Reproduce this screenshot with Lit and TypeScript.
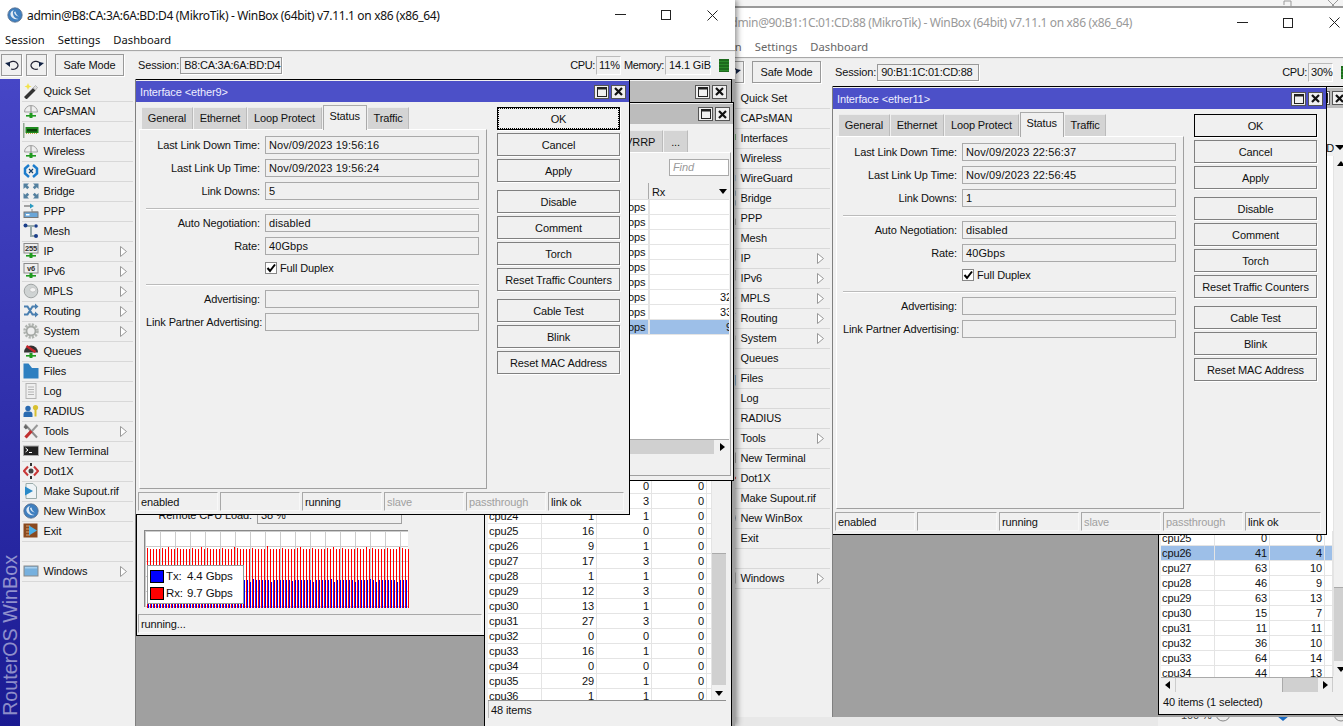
import { LitElement, html, css, svg } from "lit";
import { customElement } from "lit/decorators.js";

const ball = svg`<circle cx="8" cy="8" r="7.2" fill="#3f7fbf" stroke="#5a6f8a" stroke-width=".8"/><path d="M3.5 8c1 3 4 5 8 4-3-.5-5-2-5.5-5-.3-1.5 0-3 1-4-2.500 .5-4 2.500-3.500 5z" fill="#dfeaf5"/><path d="M7 5c.5 2.500 2 4 5 4.500-2-1-3-2.500-3.500-5z" fill="#dfeaf5"/>`;
const corner = svg`<path d="M.5 .5h5.500l-1.800 1.800 2 2-1.900 1.900-2-2L.5 6z" fill="#54809f"/>`;
const plug = svg`<rect x="3" y="12" width="10" height="1.600" fill="#1f9a1f"/><rect x="6.500" y="10" width="3" height="5" fill="#1f9a1f"/>`;
const monitor = (t: string) => svg`<rect x="1" y=".5" width="14" height="9.500" fill="#eee" stroke="#8a8a8a"/><text x="8" y="8" text-anchor="middle" font-size="7.500" font-weight="700" font-family="Liberation Sans, sans-serif" fill="#333">${t}</text>${plug}`;

const ICONS: Record<string, unknown> = {
  quick: svg`<path d="M1 14l9-9 2.500 2.500-9 9z" fill="#333"/><path d="M10 5l2.500-2.500 2 2L12.500 7z" fill="#ddd" stroke="#888" stroke-width=".5"/><path d="M5 0l1 2.500 2.500 1-2.500 1-1 2.500-1-2.500L1.500 3.500 4 2.500z" fill="#f2e24a"/>`,
  dome: svg`<path d="M1.500 9a6.500 6.500 0 0 1 13 0z" fill="#eee" stroke="#a0a0a0"/><path d="M8 3v8" stroke="#8a8a8a"/>${plug}`,
  iface: svg`<rect x="0" y="0" width="1.500" height="15" fill="#93a893"/><rect x="2.500" y="4" width="13" height="6" fill="#1e8a1e"/><rect x="4" y="6" width="10" height="2.500" fill="#0b3f0b"/><path d="M3 10.500h12" stroke="#bba23a" stroke-dasharray="1 1"/>`,
  wg: svg`<path d="M6 2L2 5.500v5L6 14" stroke="#1c7ccc" stroke-width="2.500" fill="none"/><path d="M10 2l4 3.500v5L10 14" stroke="#1c7ccc" stroke-width="2.500" fill="none"/><path d="M6 6l4 4M10 6l-4 4" stroke="#123f6b" stroke-width="1.200"/>`,
  bridge: svg`${corner}<g transform="rotate(90 8 8)">${corner}</g><g transform="rotate(180 8 8)">${corner}</g><g transform="rotate(270 8 8)">${corner}</g>`,
  ppp: svg`<path d="M1 3h6" stroke="#888" stroke-width="1.500"/><path d="M7 .5l4 2.500-4 2.500z" fill="#2a9ac0"/><rect x="1" y="9" width="14" height="5.500" fill="#6aa6d8" stroke="#777"/><rect x="3" y="11" width="3.500" height="1.500" fill="#fff"/><path d="M9 6v3h6" stroke="#888" fill="none"/>`,
  mesh: svg`<path d="M3 3h8M8 3v10h4" stroke="#9aa" stroke-width="2" fill="none"/><circle cx="2.500" cy="2.500" r="2" fill="#1c3f8a"/><circle cx="13" cy="3" r="1.800" fill="#1c3f8a"/><circle cx="13" cy="13" r="2" fill="#1c3f8a"/>`,
  ip: monitor("255"),
  ip6: monitor("v6"),
  mpls: svg`<circle cx="8" cy="8" r="6.800" fill="#cfd3d3" stroke="#a0a4a4"/><ellipse cx="9.800" cy="6.800" rx="3" ry="2.200" fill="#f4f4f4" stroke="#aaa" stroke-width=".5"/>`,
  routing: svg`<path d="M1 3.500h3.500l5 8H13M1 11.500h3.500l5-8H13" stroke="#4a7fb0" fill="none" stroke-width="2"/><path d="M12 .5l3.500 3-3.500 3zM12 8.500l3.500 3-3.500 3z" fill="#4a7fb0"/>`,
  system: svg`<circle cx="8" cy="8" r="6.500" fill="none" stroke="#b0b4b0" stroke-width="2.500" stroke-dasharray="2.200 1.200"/><circle cx="8" cy="8" r="4.500" fill="#eee" stroke="#a4a8a4" stroke-width="1.800"/>`,
  queues: svg`<path d="M1 9.500a7 7 0 0 1 14 0z" fill="#333"/><path d="M3.500 3l9 6" stroke="#c8242c" stroke-width="2.500"/>${plug}`,
  files: svg`<path d="M.5 .5h5l3.500 4.500h6.500v10.500H.5z" fill="#2e7fc0"/>`,
  log: svg`<rect x="3" y=".5" width="10" height="15" fill="#efefef" stroke="#b4b4b4"/><path d="M5 4h6M5 6.500h6M5 9h6M5 11.500h6" stroke="#b4b4b4"/>`,
  radius: svg`<circle cx="5" cy="5.500" r="2.700" fill="#2a6ab0"/><path d="M.5 14v-2.500a3 3 0 0 1 3-3h3a3 3 0 0 1 3 3V14z" fill="#2a6ab0"/><circle cx="12.500" cy="4.500" r="2.600" fill="#d8c030"/><path d="M11.500 6.500h2v7h-2z" fill="#d8c030"/>`,
  tools: svg`<path d="M2 1.500l12 13" stroke="#8c8c8c" stroke-width="2"/><path d="M1.500 3l2.500 2.500" stroke="#666" stroke-width="3"/><path d="M14.500 2L8 9" stroke="#999" stroke-width="2"/><path d="M8.500 8L2.500 14.500" stroke="#c03030" stroke-width="3.200"/>`,
  term: svg`<rect x=".5" y="3" width="15" height="9.500" fill="#222" stroke="#aaa"/><path d="M2.500 5l2.500 2-2.500 2M6 9.500h3" stroke="#fff" fill="none"/>`,
  dot1x: svg`<circle cx="8" cy="8" r="2.500" fill="#444"/><path d="M5 3.500L1 8l4 4.500M11 3.500L15 8l-4 4.500" stroke="#c83838" stroke-width="2" fill="none"/><path d="M8 0v3M8 13v3" stroke="#333" stroke-width="2"/>`,
  supout: svg`<path d="M3 .5h7l3.500 3.500v11.500H3z" fill="#eef3f6" stroke="#9aa"/><path d="M2 3.500l8 4.500-8 4.500z" fill="#2a8ac8"/>`,
  winbox: ball,
  exit: svg`<rect x=".5" y=".5" width="14" height="14" fill="#8a4a20"/><path d="M3 3h4M3 6h3M3 9h3M3 12h4" stroke="#d8a070"/><path d="M14 7.500L6 2.500v10z" fill="#4ab0e8"/>`,
  windows: svg`<rect x="1" y="3" width="14" height="10" fill="#76b0de" stroke="#8a8a8a"/><rect x="2" y="4" width="12" height="1.500" fill="#a8d0ee"/>`,
};

type MenuItem = { n?: string; i?: string; sub?: boolean };
const MENU: MenuItem[] = [
  { n: "Quick Set", i: "quick" }, { n: "CAPsMAN", i: "dome" }, { n: "Interfaces", i: "iface" }, { n: "Wireless", i: "dome" },
  { n: "WireGuard", i: "wg" }, { n: "Bridge", i: "bridge" }, { n: "PPP", i: "ppp" }, { n: "Mesh", i: "mesh" },
  { n: "IP", i: "ip", sub: true }, { n: "IPv6", i: "ip6", sub: true }, { n: "MPLS", i: "mpls", sub: true }, { n: "Routing", i: "routing", sub: true },
  { n: "System", i: "system", sub: true }, { n: "Queues", i: "queues" }, { n: "Files", i: "files" }, { n: "Log", i: "log" },
  { n: "RADIUS", i: "radius" }, { n: "Tools", i: "tools", sub: true }, { n: "New Terminal", i: "term" }, { n: "Dot1X", i: "dot1x" },
  { n: "Make Supout.rif", i: "supout" }, { n: "New WinBox", i: "winbox" }, { n: "Exit", i: "exit" }, {},
  { n: "Windows", i: "windows", sub: true },
];

type Row = [string, string, string, string];
const LEFT_ROWS: Row[] = [
  ["cpu22", "", "0", "0"], ["cpu23", "", "3", "0"], ["cpu24", "1", "1", "0"], ["cpu25", "16", "0", "0"], ["cpu26", "9", "1", "0"],
  ["cpu27", "17", "3", "0"], ["cpu28", "1", "1", "0"], ["cpu29", "12", "3", "0"], ["cpu30", "13", "1", "0"], ["cpu31", "27", "3", "0"],
  ["cpu32", "0", "0", "0"], ["cpu33", "16", "1", "0"], ["cpu34", "0", "0", "0"], ["cpu35", "29", "1", "0"], ["cpu36", "1", "1", "0"],
];
const RIGHT_ROWS: Row[] = [
  ["cpu25", "0", "0", ""], ["cpu26", "41", "4", ""], ["cpu27", "63", "10", ""], ["cpu28", "46", "9", ""], ["cpu29", "63", "13", ""],
  ["cpu30", "15", "7", ""], ["cpu31", "11", "11", ""], ["cpu32", "36", "10", ""], ["cpu33", "64", "14", ""], ["cpu34", "44", "13", ""],
];

const BUTTON_GROUPS = [["OK", "Cancel", "Apply"], ["Disable", "Comment", "Torch", "Reset Traffic Counters"], ["Cable Test", "Blink", "Reset MAC Address"]];

const ctlMax = html`<span class="ctl"><svg width="10" height="10" viewBox="0 0 10 10"><rect x=".5" y=".5" width="9" height="9" fill="none" stroke="#222"/><path d="M0 1.500h10" stroke="#222" stroke-width="2"/></svg></span>`;
const ctlClose = html`<span class="ctl"><svg width="9" height="9" viewBox="0 0 9 9"><path d="M1 1l7 7M8 1l-7 7" stroke="#111" stroke-width="2.200"/></svg></span>`;
const miniArrow = (d: string) => html`<svg width="10" height="10" viewBox="0 0 10 10"><path d="${d}" fill="#000"/></svg>`;

function bars() {
  const out: unknown[] = [];
  for (let i = 0; i < 88; i++) {
    const x = 2 + i * 3;
    const r = 17 + ((i * 7) % 5 === 0 ? 0 : 1) + ((i * 13) % 11 === 3 ? -2 : 0);
    const b = 49 + ((i * 5) % 7 === 2 ? 2 : 0) - ((i * 3) % 13 === 1 ? 1 : 0);
    out.push(svg`<rect x="${x}" y="${r}" width="1" height="${77 - r}" fill="#f00"/><rect x="${x + 1}" y="${b}" width="1" height="${77 - b}" fill="#00f"/>`);
  }
  return out;
}

@customElement("app-root")
export class AppRoot extends LitElement {
  static styles = css`
    :host { display: block; position: relative; width: 1343px; height: 726px; overflow: hidden; background: #f0f0f0;
      font: 11px "Liberation Sans", Arial, sans-serif; letter-spacing: -.12px; color: #111; }
    * { box-sizing: border-box; }
    .strip { position: absolute; left: 735px; display: block; }
    .strip.top { top: 0; }
    .strip.bottom { top: 716px; }
    .wb { position: absolute; display: flex; flex-direction: column; background: #f0f0f0; overflow: hidden; }
    .wb.left { left: 0; top: 0; width: 735px; height: 726px; box-shadow: 2px 0 6px rgba(0,0,0,.45); z-index: 2; overflow: visible; }
    .wb.right { left: 697px; top: 7px; width: 660px; height: 710px; border-top: 1px solid #9a9a9a; z-index: 1; }
    .tb { height: 30px; flex: none; background: #fff; display: flex; align-items: center; padding-left: 7px; font: 12px "Noto Sans", sans-serif; letter-spacing: -.34px; gap: 4px; }
    .right .tb { height: 29px; color: #999; }
    .tb .title { flex: 1; white-space: nowrap; }
    .sys { display: flex; width: 138px; height: 30px; align-items: center; }
    .sys span { width: 46px; display: flex; justify-content: center; }
    .mb { height: 21px; flex: none; background: #fff; display: flex; gap: 13px; padding-left: 5px; align-items: center; font: 11.2px "Noto Sans", sans-serif; letter-spacing: 0; border-bottom: 1px solid #a8a8a8; padding-bottom: 1px; }
    .right .mb { color: #666; }
    .tools { height: 28px; flex: none; display: flex; align-items: center; padding: 0 6px 1px 1px; border-top: 1px solid #e8e8e8; }
    .tbtn { height: 22px; border: 1px solid #999; display: flex; align-items: center; justify-content: center; background: #f0f0f0; box-shadow: 1px 1px 0 #fff; flex: none; }
    .tbtn.ic { width: 21px; margin-right: 4px; }
    .tbtn.safe { width: 69px; margin: 0 14px 0 4px; }
    .lbl { white-space: nowrap; }
    .lbl.n { letter-spacing: -.4px; }
    .sess { margin-left: 1px; width: 102px; height: 17px; border: 1px solid #999; background: #f0f0f0; padding-left: 3px; line-height: 15px; white-space: nowrap; box-shadow: 1px 1px 0 #fff; letter-spacing: -.25px; }
    .spacer { flex: 1; }
    .mon { border: 1px solid #ccc; border-color: #bbb #fff #fff #bbb; height: 19px; line-height: 17px; padding: 0 3px; white-space: nowrap; }
    .mon.cpu { width: 25px; margin: 0 3px 0 1px; padding: 0 2px; }
    .mon.cpu.solo { margin-right: 8px; }
    .mon.mem { width: 46px; margin: 0 8px 0 1px; }
    .led { width: 10px; height: 13px; background: repeating-linear-gradient(#1d6a1d 0 2px, #2a8a2a 2px 3px); flex: none; }
    .main { flex: 1; display: flex; min-height: 0; }
    .side { width: 20px; flex: none; background: linear-gradient(#4646c6, #1a1a92); display: flex; align-items: flex-end; justify-content: center; padding-bottom: 10px; overflow: hidden; }
    .side span { writing-mode: vertical-rl; transform: rotate(180deg); color: rgba(255,255,255,.5); font-size: 19.7px; letter-spacing: 0; white-space: nowrap; line-height: 20px; }
    .menu { width: 115px; flex: none; padding: 3px 2px 0 2px; }
    .mi { height: 20px; border-bottom: 1px solid #d8d8d8; display: flex; align-items: center; gap: 4.500px; padding: 0 0 1px 1px; position: relative; }
    .mi svg.ico { width: 16px; height: 16px; flex: none; }
    .mi .tri { position: absolute; right: 6px; top: 4px; }
    .mdi { flex: 1; position: relative; background: #a0a0a0; border-left: 1px solid #808080; overflow: hidden; }
    .win { position: absolute; background: #f0f0f0; border: 1px solid #000; display: flex; flex-direction: column; }
    .wt { height: 21px; flex: none; background: #bcbcbc; display: flex; align-items: center; justify-content: flex-end; gap: 2px; padding: 0 3px 0 4px; color: #fff; margin-top: 1px; }
    .wt .t { flex: 1; white-space: nowrap; }
    .ctl { width: 15px; height: 14px; background: #f0f0f0; border: 1px solid #555; display: flex; align-items: center; justify-content: center; flex: none; }
    .dlg { z-index: 5; }
    .dlg .wt { background: #4c50c8; color: #eef; margin: 1px 0 0; }
    .dlg.l { left: -1px; top: 0; width: 495px; height: 436px; }
    .dlg.r { left: -1px; top: 0; width: 495px; height: 449px; }
    .body { flex: 1; display: flex; min-height: 0; padding: 2px 9px 0 3px; }
    .tabpane { width: 348px; flex: none; display: flex; flex-direction: column; }
    .tabs { display: flex; height: 25px; align-items: flex-end; padding-left: 3px; gap: 1px; flex: none; }
    .tab { height: 22px; padding: 0 5.800px 1px; background: #d4d4d4; display: flex; align-items: center; border-top: 1px solid #ececec; border-right: 1px solid #bbb; white-space: nowrap; }
    .tab.on { height: 25px; background: #f0f0f0; border: 1px solid #aaa; border-bottom: 0; padding-bottom: 4px; margin-bottom: -1px; z-index: 1; position: relative; }
    .panel { flex: 1; border: 1px solid; border-color: #fff #a0a0a0 #a0a0a0 #fff; padding: 6px 7px 0 6px; display: flex; flex-direction: column; gap: 5px; }
    .frow { display: flex; gap: 5px; height: 18px; align-items: center; flex: none; }
    .frow.chk { height: 16px; }
    .frow label { width: 114px; text-align: right; white-space: nowrap; flex: none; }
    .frow .val { flex: 1; height: 18px; border: 1px solid #a0a0a0; border-color: #8f8f8f #fff #fff #8f8f8f; outline: 1px solid #aaa; outline-offset: -1px; line-height: 16px; padding-left: 3px; background: #f0f0f0; letter-spacing: .1px; }
    .cb { width: 12px; height: 12px; border: 1px solid #888; background: #fff; flex: none; display: flex; align-items: center; justify-content: center; }
    .duplex { display: flex; gap: 3px; align-items: center; }
    .sep { height: 1px; background: #bbb; margin-top: 3px; flex: none; box-shadow: 0 1px 0 #fff; }
    .btns { flex: 1; margin: 3px 0 0 10px; display: flex; flex-direction: column; gap: 8px; }
    .bgrp { display: flex; flex-direction: column; gap: 3px; }
    .btn { height: 23px; border: 1px solid #808080; background: #f0f0f0; box-shadow: 1px 1px 0 #fff; display: flex; align-items: center; justify-content: center; white-space: nowrap; }
    .btn.def { border-color: #000; }
    .btn.focus span { outline: 1px dotted #000; outline-offset: 0; width: 119px; height: 19px; display: flex; align-items: center; justify-content: center; }
    .status { height: 25px; flex: none; display: flex; gap: 2px; padding: 3px 4px 3px 2px; }
    .cell { width: 80px; flex: none; border: 1px solid; border-color: #a8a8a8 #f8f8f8 #f8f8f8 #a8a8a8; padding: 1px 0 0 2px; display: flex; align-items: center; white-space: nowrap; }
    .cell.dim { color: #a0a0a0; }
    .cell.last { width: 76px; }
    .gw { left: 0; top: 200px; width: 420px; height: 357px; z-index: 1; padding: 0 1px; }
    .gform { height: 244px; display: flex; justify-content: flex-end; align-items: flex-end; flex: none; width: 264px; gap: 5px; }
    .gform .v { width: 145px; height: 18px; border: 1px solid #a0a0a0; padding-left: 3px; line-height: 16px; flex: none;}
    .gform .lbl { line-height: 18px; }
    .graph { position: relative; width: 264px; height: 77px; margin: 6px 0 0 6px; flex: none; border-left: 1px solid #888; border-top: 1px solid #888; background-color: #fff;
      background-image: linear-gradient(90deg, #ccc 1px, transparent 1px), linear-gradient(#ccc 1px, transparent 1px); background-size: 15px 15px; }
    .graph svg { position: absolute; left: 0; top: 0; }
    .legend { position: absolute; left: 2px; top: 34px; width: 97px; height: 39px; background: #fff; border: 1px solid #999; padding: 3px 2px; display: flex; flex-direction: column; gap: 3px; font-size: 11.5px; }
    .lg { display: flex; align-items: center; gap: 2px; height: 14px; }
    .lg i { width: 14px; height: 13px; border: 1px solid #000; flex: none; }
    .lg i.tx { background: #00f; } .lg i.rx { background: #f00; }
    .lg b { font-weight: 400; width: 19px; }
    .gstat { margin: 7px 0 0 0; height: 19px; width: 344px; flex: none; border: 1px solid; border-color: #a8a8a8 #f8f8f8 #f8f8f8 #a8a8a8; padding-left: 2px; display: flex; align-items: center; }
    .list { display: flex; flex-direction: column; background: #fff; overflow: hidden; }
    .row { height: 15px; flex: none; display: flex; border-bottom: 1px solid #e4e4e4; background: #fff; }
    .row.sel { background: #9dbfe8; }
    .row > span { height: 14px; line-height: 14px; padding: 0 2px 0 1px; border-right: 1px solid #e4e4e4; white-space: nowrap; text-align: right; flex: none; overflow: hidden; }
    .row > span:first-child { text-align: left; }
    .cpuw { left: 348px; top: 0; width: 248px; height: 660px; z-index: 2; }
    .cpuw .wt { padding-right: 4px; }
    .cpuw .list { position: relative; margin: 0 0 0 3px; height: 222px; width: 238px; border-bottom: 1px solid #909090; flex: none; }
    .cpuw .gapper { height: 377px; flex: none; }
    .cw0 { width: 54px; } .cw1 { width: 55px; } .cw2 { width: 55px; } .cw3 { width: 55px; }
    .vbar { position: absolute; right: 0; top: 0; bottom: 0; width: 15px; background: #d0d0d0; border-left: 1px solid #e4e4e4; display: flex; flex-direction: column; }
    .vbar .thumb { height: 75px; background: #f0f0f0; border-bottom: 1px solid #aaa; flex: none; }
    .vbar .fill { flex: 1; }
    .vbar .sbtn { height: 15px; flex: none; background: #f0f0f0; display: flex; align-items: center; justify-content: center; }
    .foot { margin: 0 5px 0 3px; height: 17px; border-left: 1px solid #bbb; padding-left: 2px; display: flex; align-items: center; flex: none; }
    .ifw { left: 347px; top: 23px; width: 251px; height: 379px; z-index: 3; }
    .ifw .wt { margin-top: 1px; height: 20px; }
    .tabs2 { display: flex; justify-content: flex-end; height: 28px; align-items: flex-end; gap: 1px; padding-right: 45px; flex: none; }
    .tabs2 .tab { height: 22px; padding: 0 7px; }
    .ifp { flex: 1; margin: 0 2px 4px 0; border: 1px solid; border-color: #fff #a0a0a0 #a0a0a0 #fff; display: flex; flex-direction: column; padding-right: 1px; }
    .find { align-self: flex-end; width: 60px; height: 17px; margin: 6px 0 7px 0; background: #fff; border: 1px solid #aaa; color: #999; font-style: italic; padding-left: 3px; line-height: 15px; flex: none; }
    .itable { margin: 0 0 21px 0; flex: 1; background: #fff; display: flex; flex-direction: column; overflow: hidden; }
    .ihdr { height: 17px; background: #f0f0f0; display: flex; flex: none; justify-content: flex-end; border-bottom: 1px solid #ddd; }
    .ihdr span { width: 81px; border-left: 1px solid #aaa; padding-left: 3px; position: relative; line-height: 19px; }
    .ihdr span svg { position: absolute; right: 1px; top: 4px; }
    .irow { height: 15px; flex: none; display: flex; justify-content: flex-end; border-bottom: 1px solid #e4e4e4; }
    .irow.sel { background: #9dbfe8; }
    .irow span { width: 81px; text-align: right; line-height: 14px; border-left: 2px solid #e4e4e4; overflow: hidden; white-space: nowrap; }
    .irow span em { font-style: normal; display: inline-block; margin-right: -3px; }
    .irow span.nm { width: 20px; border: 0; text-align: left; }
    .irest { flex: 1; }
    .ih { height: 15px; flex: none; background: #d0d0d0; border-top: 1px solid #aaa; display: flex; justify-content: flex-end; }
    .ih .b { width: 15px; background: #f0f0f0; display: flex; align-items: center; justify-content: center; }
    .tw { left: 325px; top: 0; width: 210px; height: 629px; z-index: 1; padding-left: 2px; }
    .tw .wt { height: 20px; justify-content: flex-end; padding-right: 20px; margin-top: 1px; }
    .thead { height: 16px; margin-top: 32px; background: #f0f0f0; display: flex; justify-content: flex-end; align-items: center; padding-right: 22px; flex: none; gap: 1px; line-height: 15px; }
    .tlist { position: relative; flex: 1; min-height: 0; display: flex; flex-direction: column; }
    .tlist .spacer2 { height: 375px; flex: none; background: #fff; }
    .tlist .list { width: 172px; height: 146px; flex: none; }
    .tlist .row { width: 172px; }
    .tlist .cw3 { width: 8px; padding: 0; }
    .tlist .vbar { width: 15px; top: 0; bottom: auto; height: 520px; left: 172px; }
    .tlist .vbar .thumb { height: 417px; }
    .hs { height: 15px; width: 172px; flex: none; display: flex; border-top: 1px solid #aaa; background: #f0f0f0; }
    .hs .b { width: 15px; display: flex; align-items: center; justify-content: center; flex: none; border-right: 1px solid #ccc; }
    .hs .th { width: 107px; border-right: 1px solid #aaa; }
    .hs .tr { flex: 1; background: #d0d0d0; }
    .foot2 { height: 19px; display: flex; align-items: center; padding-left: 2px; flex: none; }
  `;

  private dialog(cls: string, name: string, f: { down: string; up: string; n: string }, focused: boolean) {
    return html`<div class="win dlg ${cls}">
      <div class="wt"><span class="t">Interface &lt;${name}&gt;</span>${ctlMax}${ctlClose}</div>
      <div class="body">
        <div class="tabpane">
          <div class="tabs">
            <span class="tab">General</span><span class="tab">Ethernet</span><span class="tab">Loop Protect</span><span class="tab on">Status</span><span class="tab">Traffic</span>
          </div>
          <div class="panel">
            <div class="frow"><label>Last Link Down Time:</label><span class="val">${f.down}</span></div>
            <div class="frow"><label>Last Link Up Time:</label><span class="val">${f.up}</span></div>
            <div class="frow"><label>Link Downs:</label><span class="val">${f.n}</span></div>
            <div class="sep"></div>
            <div class="frow"><label>Auto Negotiation:</label><span class="val">disabled</span></div>
            <div class="frow"><label>Rate:</label><span class="val">40Gbps</span></div>
            <div class="frow chk"><label></label><span class="duplex"><span class="cb"><svg width="10" height="10" viewBox="0 0 10 10"><path d="M1.500 5l2.500 3 5-6.500" stroke="#000" stroke-width="2" fill="none"/></svg></span>Full Duplex</span></div>
            <div class="sep"></div>
            <div class="frow"><label>Advertising:</label><span class="val"></span></div>
            <div class="frow"><label>Link Partner Advertising:</label><span class="val"></span></div>
          </div>
        </div>
        <div class="btns">
          ${BUTTON_GROUPS.map((g) => html`<div class="bgrp">${g.map((b) => html`<div class="btn ${b === "OK" ? "def" : ""} ${b === "OK" && focused ? "focus" : ""}"><span>${b}</span></div>`)}</div>`)}
        </div>
      </div>
      <div class="status">
        <span class="cell">enabled</span><span class="cell"></span><span class="cell">running</span><span class="cell dim">slave</span><span class="cell dim">passthrough</span><span class="cell last">link ok</span>
      </div>
    </div>`;
  }

  private chrome(title: string, session: string, cpu: string, mem?: string) {
    return html`
      <div class="tb">
        <svg width="16" height="16" viewBox="0 0 16 16">${ball}</svg>
        <span class="title">${title}</span>
        <div class="sys">
          <span><svg width="11" height="2"><rect width="11" height="1" fill="#222"/></svg></span>
          <span><svg width="10" height="10"><rect x=".5" y=".5" width="9" height="9" fill="none" stroke="#222"/></svg></span>
          <span><svg width="11" height="11"><path d="M.5 .5l10 10M10.500 .5l-10 10" stroke="#222" fill="none"/></svg></span>
        </div>
      </div>
      <div class="mb"><span>Session</span><span>Settings</span><span>Dashboard</span></div>
      <div class="tools">
        <span class="tbtn ic"><svg width="14" height="12" viewBox="0 0 14 12"><path d="M3 6a5 4 0 1 1 3 4" fill="none" stroke="#223" stroke-width="1.200"/><path d="M0 4l5-1v5z" fill="#124"/></svg></span>
        <span class="tbtn ic"><svg width="14" height="12" viewBox="0 0 14 12"><path d="M11 6a5 4 0 1 0-3 4" fill="none" stroke="#223" stroke-width="1.200"/><path d="M14 4l-5-1v5z" fill="#124"/></svg></span>
        <span class="tbtn safe">Safe Mode</span>
        <span class="lbl">Session:</span><span class="sess">${session}</span>
        <span class="spacer"></span>
        <span class="lbl n">CPU:</span><span class="mon cpu ${mem ? "" : "solo"}">${cpu}</span>
        ${mem ? html`<span class="lbl n">Memory:</span><span class="mon mem">${mem}</span>` : ""}
        <span class="led"></span>
      </div>`;
  }

  private menu() {
    return html`<div class="side"><span>RouterOS WinBox</span></div>
      <div class="menu">
        ${MENU.map((m) => html`<div class="mi">${m.i ? html`<svg class="ico" viewBox="0 0 16 16">${ICONS[m.i]}</svg>` : ""}<span>${m.n ?? ""}</span>${m.sub ? html`<svg class="tri" width="7" height="11" viewBox="0 0 7 11"><path d="M.5 .5l6 5-6 5z" fill="#fff" stroke="#999"/></svg>` : ""}</div>`)}
      </div>`;
  }

  private tableRow(r: Row, sel: boolean, four: boolean) {
    return html`<div class="row ${sel ? "sel" : ""}"><span class="cw0">${r[0]}</span><span class="cw1">${r[1]}</span><span class="cw2">${r[2]}</span><span class="cw3">${four ? r[3] : ""}</span></div>`;
  }

  render() {
    const ifRows = [["ops",""],["ops",""],["ops",""],["ops",""],["ops",""],["ops",""],["ops","32"],["ops","33"],["ops","9"]];
    return html`
      <svg class="strip top" width="608" height="7" viewBox="0 0 608 7">
        <rect width="608" height="6" fill="#f4f4f4"/><rect y="6" width="608" height="1" fill="#9a9a9a"/>
        <path d="M549 5V1h7v5" fill="none" stroke="#999"/><path d="M593 0l6 6M603 0l-6 6" stroke="#999"/>
      </svg>
      <svg class="strip bottom" width="608" height="10" viewBox="0 0 608 10">
        <rect width="423" height="10" fill="#e8e8e8"/><rect x="423" width="185" height="10" fill="#f0f0f0"/>
        <rect width="423" height="1" fill="#8a8a8a"/>
        <text x="446" y="3" font-size="11" font-family="Liberation Sans, sans-serif" fill="#444">100 %</text>
        <circle cx="488" cy="-2" r="7" fill="#eee" stroke="#888"/><path d="M542 0h12l-6 5z" fill="#1a6ac0"/><circle cx="606" cy="-2" r="7" fill="#eee" stroke="#888"/>
      </svg>

      <div class="wb right">
        ${this.chrome("admin@90:B1:1C:01:CD:88 (MikroTik) - WinBox (64bit) v7.11.1 on x86 (x86_64)", "90:B1:1C:01:CD:88", "30%")}
        <div class="main">
          ${this.menu()}
          <div class="mdi">
            <div class="win tw">
              <div class="wt">${ctlMax}${ctlClose}</div>
              <div class="thead"><span>D</span><svg width="10" height="8" viewBox="0 0 10 8">
                <path d="M0 1h10l-5 5z" fill="#000"/></svg></div>
              <div class="tlist">
                <div class="spacer2"></div>
                <div class="list">${RIGHT_ROWS.map((r, i) => this.tableRow(r, i === 1, false))}</div>
                <div class="vbar"><div class="sbtn">${miniArrow("M5 2l4 5H1z")}</div><div class="thumb"></div><div class="fill"></div><div class="sbtn">${miniArrow("M1 3h8L5 8z")}</div></div>
                <div class="hs"><span class="b">${miniArrow("M7 1v8L2 5z")}</span><span class="th"></span><span class="tr"></span><span class="b">${miniArrow("M3 1v8l5-4z")}</span></div>
                <div class="foot2">40 items (1 selected)</div>
              </div>
            </div>
            ${this.dialog("r", "ether11", { down: "Nov/09/2023 22:56:37", up: "Nov/09/2023 22:56:45", n: "1" }, false)}
          </div>
        </div>
      </div>

      <div class="wb left">
        ${this.chrome("admin@B8:CA:3A:6A:BD:D4 (MikroTik) - WinBox (64bit) v7.11.1 on x86 (x86_64)", "B8:CA:3A:6A:BD:D4", "11%", "14.1 GiB")}
        <div class="main">
          ${this.menu()}
          <div class="mdi">
            <div class="win gw">
              <div class="gform"><span class="lbl">Remote CPU Load:</span><span class="v">38 %</span></div>
              <div class="graph">
                <svg width="264" height="77" viewBox="0 0 264 77">${bars()}</svg>
                <div class="legend">
                  <div class="lg"><i class="tx"></i><b>Tx:</b><span>4.4 Gbps</span></div>
                  <div class="lg"><i class="rx"></i><b>Rx:</b><span>9.7 Gbps</span></div>
                </div>
              </div>
              <div class="gstat">running...</div>
            </div>
            <div class="win cpuw">
              <div class="wt">${ctlMax}${ctlClose}</div>
              <div class="gapper"></div>
              <div class="list">
                ${LEFT_ROWS.map((r) => this.tableRow(r, false, true))}
                <div class="vbar"><div class="thumb"></div><div class="fill"></div><div class="sbtn">${miniArrow("M1 3h8L5 8z")}</div></div>
              </div>
              <div class="foot">48 items</div>
            </div>
            <div class="win ifw">
              <div class="wt">${ctlMax}${ctlClose}</div>
              <div class="tabs2"><span class="tab">VRRP</span><span class="tab">...</span></div>
              <div class="ifp">
                <div class="find">Find</div>
                <div class="itable">
                  <div class="ihdr"><span>Rx<svg width="10" height="10" viewBox="0 0 10 10"><path d="M1 2h8L5 7z" fill="#000"/></svg></span></div>
                  ${ifRows.map((r, i) => html`<div class="irow ${i === 8 ? "sel" : ""}"><span class="nm">${r[0]}</span><span><em>${r[1]}</em></span></div>`)}
                  <div class="irest"></div>
                  <div class="ih"><span class="b">${miniArrow("M3 1v8l5-4z")}</span></div>
                </div>
              </div>
            </div>
            ${this.dialog("l", "ether9", { down: "Nov/09/2023 19:56:16", up: "Nov/09/2023 19:56:24", n: "5" }, true)}
          </div>
        </div>
      </div>
    `;
  }
}
